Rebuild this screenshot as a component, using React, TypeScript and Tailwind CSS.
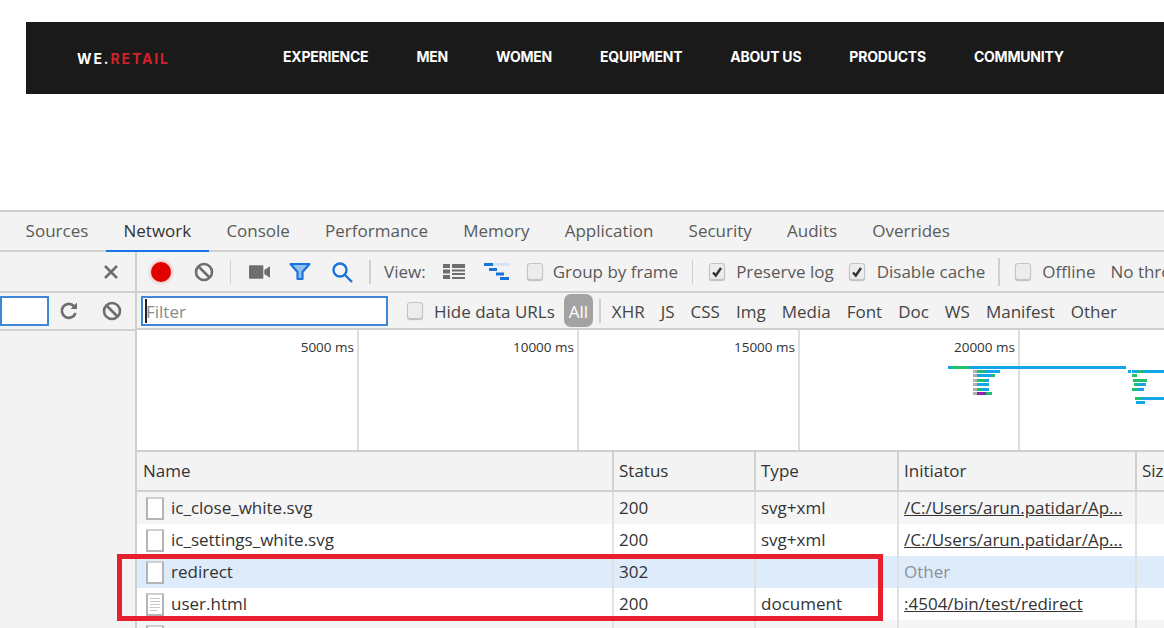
import React from "react";

const tabs = ["Sources", "Network", "Console", "Performance", "Memory", "Application", "Security", "Audits", "Overrides"];
const filters = ["XHR", "JS", "CSS", "Img", "Media", "Font", "Doc", "WS", "Manifest", "Other"];
const navItems = ["EXPERIENCE", "MEN", "WOMEN", "EQUIPMENT", "ABOUT US", "PRODUCTS", "COMMUNITY"];
const marks = ["5000 ms", "10000 ms", "15000 ms", "20000 ms"];

function BlockIcon({ size = 20 }: { size?: number }) {
	return (
		<svg className="shrink-0" width={size} height={size} viewBox="0 0 20 20" fill="none" stroke="#6e6e6e" strokeWidth="2.6">
			<circle cx="10" cy="10" r="8" />
			<path d="M4.5 4.5l11 11" />
		</svg>
	);
}

function Checkbox({ checked }: { checked?: boolean }) {
	return (
		<span className="flex h-[17px] w-[16px] shrink-0 items-center justify-center rounded-[3px] border border-[#c4c4c4] bg-[#ececec] shadow-[0_1px_1px_#bbb]">
			{checked && (
				<svg width="12" height="12" viewBox="0 0 12 12" fill="none" stroke="#333" strokeWidth="2.4">
					<path d="M2 6.5l2.8 3L10 2" />
				</svg>
			)}
		</span>
	);
}

function Divider() {
	return <span className="block h-[24px] w-[2px] shrink-0 bg-[#d0d0d0]" />;
}

function FileIcon({ doc }: { doc?: boolean }) {
	return (
		<span className="flex h-[23px] w-[18px] shrink-0 flex-col gap-[2px] border-2 border-[#b4b4b4] border-t-[#d0d0d0] bg-white px-[2px] pt-[3px]">
			{doc && (
				<>
					<span className="h-[1px] bg-[#c8c8c8]" />
					<span className="h-[1px] bg-[#c8c8c8]" />
					<span className="h-[1px] bg-[#c8c8c8]" />
					<span className="h-[1px] bg-[#c8c8c8]" />
					<span className="h-[1px] w-2/3 bg-[#c8c8c8]" />
				</>
			)}
		</span>
	);
}

function Row({ name, status, type, initiator, bg, doc, muted }: { name: string; status: string; type: string; initiator: string; bg: string; doc?: boolean; muted?: boolean }) {
	return (
		<div className={`grid h-[32px] grid-cols-[475px_142px_143px_238px_1fr] items-center text-[17px] text-[#333] ${bg}`}>
			<div className="flex h-full items-center gap-[7px] pl-[9px]">
				<FileIcon doc={doc} />
				<span>{name}</span>
			</div>
			<div className="flex h-full items-center border-l-2 border-[#e0e0e0] pl-[5px]">{status}</div>
			<div className="flex h-full items-center border-l-2 border-[#e0e0e0] pl-[5px]">{type}</div>
			<div className={`flex h-full items-center border-l-2 border-[#e0e0e0] pl-[5px] whitespace-nowrap ${muted ? "text-[#8a9199]" : "underline"}`}>{initiator}</div>
			<div className="h-full border-l-2 border-[#e0e0e0]" />
		</div>
	);
}

function Waterfall() {
	const bars: [number, number, number, string][] = [
		[948, 367, 4, "#12a5e8"], [952, 367, 18, "#1fbf6b"], [970, 367, 156, "#12a5e8"],
		[973, 371, 4, "#b0b0b0"], [977, 371, 8, "#1fbf6b"], [985, 371, 15, "#12a5e8"],
		[973, 375, 4, "#b0b0b0"], [977, 375, 14, "#12a5e8"], [991, 375, 4, "#1fbf6b"],
		[973, 380, 4, "#b0b0b0"], [977, 380, 8, "#1fbf6b"], [985, 380, 4, "#12a5e8"],
		[973, 384, 4, "#b0b0b0"], [977, 384, 12, "#12a5e8"],
		[973, 389, 4, "#b0b0b0"], [977, 389, 4, "#1fbf6b"], [981, 389, 8, "#12a5e8"],
		[973, 393, 4, "#b0b0b0"], [977, 393, 9, "#8e24aa"], [986, 393, 6, "#1fbf6b"],
		[1128, 371, 3, "#12a5e8"], [1132, 371, 5, "#12a5e8"], [1137, 371, 6, "#1fbf6b"], [1143, 371, 21, "#12a5e8"],
		[1132, 375, 5, "#1fbf6b"],
		[1133, 380, 14, "#1fbf6b"],
		[1134, 384, 4, "#1fbf6b"], [1138, 384, 8, "#12a5e8"],
		[1132, 389, 6, "#1fbf6b"], [1138, 389, 6, "#12a5e8"],
		[1135, 398, 6, "#1fbf6b"], [1141, 398, 23, "#12a5e8"],
		[1136, 402, 9, "#12a5e8"],
	];
	return (
		<svg className="absolute top-0 left-0" width="1027" height="120" viewBox="137 331 1027 120">
			{bars.map(([x, y, w, c], i) => (
				<rect key={i} x={x} y={y} width={w} height={3} fill={c} />
			))}
		</svg>
	);
}

export default function App() {
	return (
		<div className="relative h-[628px] w-[1164px] overflow-hidden bg-white font-['Open_Sans','Noto_Sans',sans-serif]">
			<div className="h-[210px] pt-[22px] pl-[26px]">
				<div className="flex h-[72px] items-center bg-[#1a1a1a] pl-[51px] font-['Inter',sans-serif]">
					<span className="w-[206px] text-[14px] font-bold tracking-[1.9px] text-white">
						WE.<span className="text-[#d3212c]">RETAIL</span>
					</span>
					<nav className="mb-[4px] flex gap-[48px] text-[14px] font-bold tracking-[-0.22px] whitespace-nowrap text-white">
						{navItems.map((item) => (
							<span key={item}>{item}</span>
						))}
					</nav>
				</div>
			</div>

			<div className="flex h-[418px] flex-col border-t-2 border-[#cfcfcf] bg-[#f3f3f3]">
				<div className="flex h-[40px] shrink-0 items-end border-b-2 border-[#cfcfcf] pl-[8px] text-[17px] text-[#5a5a5a]">
					{tabs.map((tab) => (
						<span
							key={tab}
							className={`-mb-[2px] flex h-[40px] items-center border-b-2 px-[17.6px] ${tab === "Network" ? "border-[#1a73e8] text-[#333]" : "border-transparent"}`}
						>
							{tab}
						</span>
					))}
				</div>

				<div className="flex min-h-0 flex-1">
					<div className="flex w-[137px] shrink-0 flex-col border-r-2 border-[#d0d0d0]">
						<div className="flex h-[41px] items-center justify-end border-b-2 border-[#d0d0d0] pr-[16px]">
							<svg width="16" height="16" viewBox="0 0 16 16" stroke="#6e6e6e" strokeWidth="2.6">
								<path d="M2 2l12 12M14 2L2 14" />
							</svg>
						</div>
						<div className="flex h-[38px] items-center border-b-2 border-[#d0d0d0]">
							<span className="h-[30px] w-[49px] shrink-0 border-2 border-[#3d86d8] bg-white" />
							<svg className="ml-[10px] shrink-0" width="20" height="20" viewBox="0 0 20 20" fill="none" stroke="#6e6e6e" strokeWidth="2.6">
								<path d="M16.5 12a7 7 0 1 1-1.6-7" />
								<path d="M18 1.5v6.5h-6.5z" fill="#6e6e6e" stroke="none" />
							</svg>
							<span className="ml-[23px]">
								<BlockIcon />
							</span>
						</div>
					</div>

					<div className="flex min-w-0 flex-1 flex-col">
						<div className="flex h-[41px] shrink-0 items-center overflow-hidden border-b-2 border-[#d0d0d0] pl-[14px] text-[17px] whitespace-nowrap text-[#5a5a5a]">
							<span className="h-[20px] w-[20px] shrink-0 rounded-full bg-[#e00000] shadow-[0_0_4px_#ee8888]" />
							<span className="ml-[23px]">
								<BlockIcon />
							</span>
							<span className="ml-[16px] h-[24px] w-[1px] shrink-0 bg-[#d0d0d0]" />
							<svg className="ml-[18px] shrink-0" width="21" height="14" viewBox="0 0 22 14" fill="#6e6e6e">
								<rect x="0" y="0" width="15" height="14" rx="1" />
								<path d="M16 5l6-4v12l-6-4z" />
							</svg>
							<svg className="ml-[19px] shrink-0" width="22" height="20" viewBox="0 0 22 20" fill="#8fc0f0" stroke="#1a73d8" strokeWidth="2.2" strokeLinejoin="round">
								<path d="M1.5 2h19l-7 8v7h-5v-7z" />
							</svg>
							<svg className="ml-[20px] shrink-0" width="22" height="22" viewBox="0 0 22 22" fill="none" stroke="#1a73d8" strokeWidth="2.4">
								<circle cx="9" cy="9" r="6.5" />
								<path d="M14 14l7 7" />
							</svg>
							<span className="ml-[16px] h-[24px] w-[2px] shrink-0 bg-[#d0d0d0]" />
							<span className="ml-[13px] pt-[1px]">View:</span>
							<svg className="ml-[17px] shrink-0" width="22" height="15" viewBox="0 0 22 15" fill="#6e6e6e">
								<rect x="0" y="0" width="7" height="4" />
								<rect x="9" y="0" width="13" height="4" />
								<rect x="0" y="5.5" width="7" height="4" />
								<rect x="9" y="5.5" width="13" height="2" />
								<rect x="9" y="9" width="13" height="2" />
								<rect x="0" y="11" width="7" height="4" />
								<rect x="9" y="13" width="13" height="2" />
							</svg>
							<svg className="ml-[19px] shrink-0" width="26" height="17" viewBox="0 0 26 17" fill="#1a73d8">
								<rect x="0" y="0" width="9" height="3" />
								<rect x="9" y="0" width="17" height="3" fill="#d6e4f5" />
								<rect x="5" y="5" width="8" height="3" />
								<rect x="12" y="9.5" width="8" height="3" />
								<rect x="16" y="14" width="9" height="3" />
							</svg>
							<span className="ml-[17px]">
								<Checkbox />
							</span>
							<span className="ml-[10px] pt-[1px]">Group by frame</span>
							<span className="ml-[14px] h-[24px] w-[1px] shrink-0 bg-[#d0d0d0]" />
							<span className="ml-[16px]">
								<Checkbox checked />
							</span>
							<span className="ml-[11px] pt-[1px]">Preserve log</span>
							<span className="ml-[15px]">
								<Checkbox checked />
							</span>
							<span className="ml-[12px] pt-[1px]">Disable cache</span>
							<span className="ml-[13px] h-[28px] w-[2px] shrink-0 bg-[#d0d0d0]" />
							<span className="ml-[15px]">
								<Checkbox />
							</span>
							<span className="ml-[11px] pt-[1px]">Offline</span>
							<span className="ml-[15px] pt-[1px]">No throttling</span>
						</div>

						<div className="flex h-[37px] shrink-0 items-center border-b-2 border-[#d0d0d0] pl-[4px] text-[17px] whitespace-nowrap text-[#444]">
							<div className="flex h-[30px] w-[247px] shrink-0 items-center border-2 border-[#3d86d8] bg-white pl-[2px] text-[#8a8a8a]">
								<span className="h-[24px] w-[2px] shrink-0 bg-[#222]" />
								<span className="-ml-[1px] pt-[2px]">Filter</span>
							</div>
							<span className="ml-[19px]">
								<Checkbox />
							</span>
							<span className="ml-[11px] pt-[2px]">Hide data URLs</span>
							<span className="ml-[9px] flex h-[33px] w-[29px] shrink-0 items-center justify-center rounded-[7px] bg-[#a3a3a3] pt-[2px] text-white">All</span>
							<span className="ml-[6px]">
								<Divider />
							</span>
							<div className="ml-[11px] flex gap-[16px] pt-[2px]">
								{filters.map((f) => (
									<span key={f}>{f}</span>
								))}
							</div>
						</div>

						<div className="relative grid h-[122px] shrink-0 grid-cols-[222px_220px_221px_220px_1fr] border-b-2 border-[#d0d0d0] bg-white text-[13.5px] text-[#333]">
							{marks.map((m) => (
								<div key={m} className="border-r-2 border-[#dedede] pt-[7px] pr-[3px] text-right">
									{m}
								</div>
							))}
							<div />
							<Waterfall />
						</div>

						<div className="grid h-[40px] shrink-0 grid-cols-[475px_142px_143px_238px_1fr] items-center border-b-2 border-[#d0d0d0] text-[17px] text-[#333]">
							<div className="pl-[6px]">Name</div>
							<div className="flex h-full items-center border-l-2 border-[#d0d0d0] pl-[5px]">Status</div>
							<div className="flex h-full items-center border-l-2 border-[#d0d0d0] pl-[5px]">Type</div>
							<div className="flex h-full items-center border-l-2 border-[#d0d0d0] pl-[5px]">Initiator</div>
							<div className="flex h-full items-center overflow-hidden border-l-2 border-[#d0d0d0] pl-[5px]">Size</div>
						</div>

						<div className="min-h-0 flex-1 overflow-hidden bg-white">
							<Row name="ic_close_white.svg" status="200" type="svg+xml" initiator="/C:/Users/arun.patidar/Ap..." bg="bg-[#f5f5f5]" />
							<Row name="ic_settings_white.svg" status="200" type="svg+xml" initiator="/C:/Users/arun.patidar/Ap..." bg="bg-white" />
							<Row name="redirect" status="302" type="" initiator="Other" bg="bg-[#deebfb]" muted />
							<Row name="user.html" status="200" type="document" initiator=":4504/bin/test/redirect" bg="bg-white" doc />
							<Row name="" status="" type="" initiator="" bg="bg-[#f5f5f5]" />
						</div>
					</div>
				</div>
			</div>

			{/* red annotation */}
			<div className="pointer-events-none absolute top-[554px] left-[117px] h-[67px] w-[766px] border-[5px] border-[#e8202e]" />
		</div>
	);
}
